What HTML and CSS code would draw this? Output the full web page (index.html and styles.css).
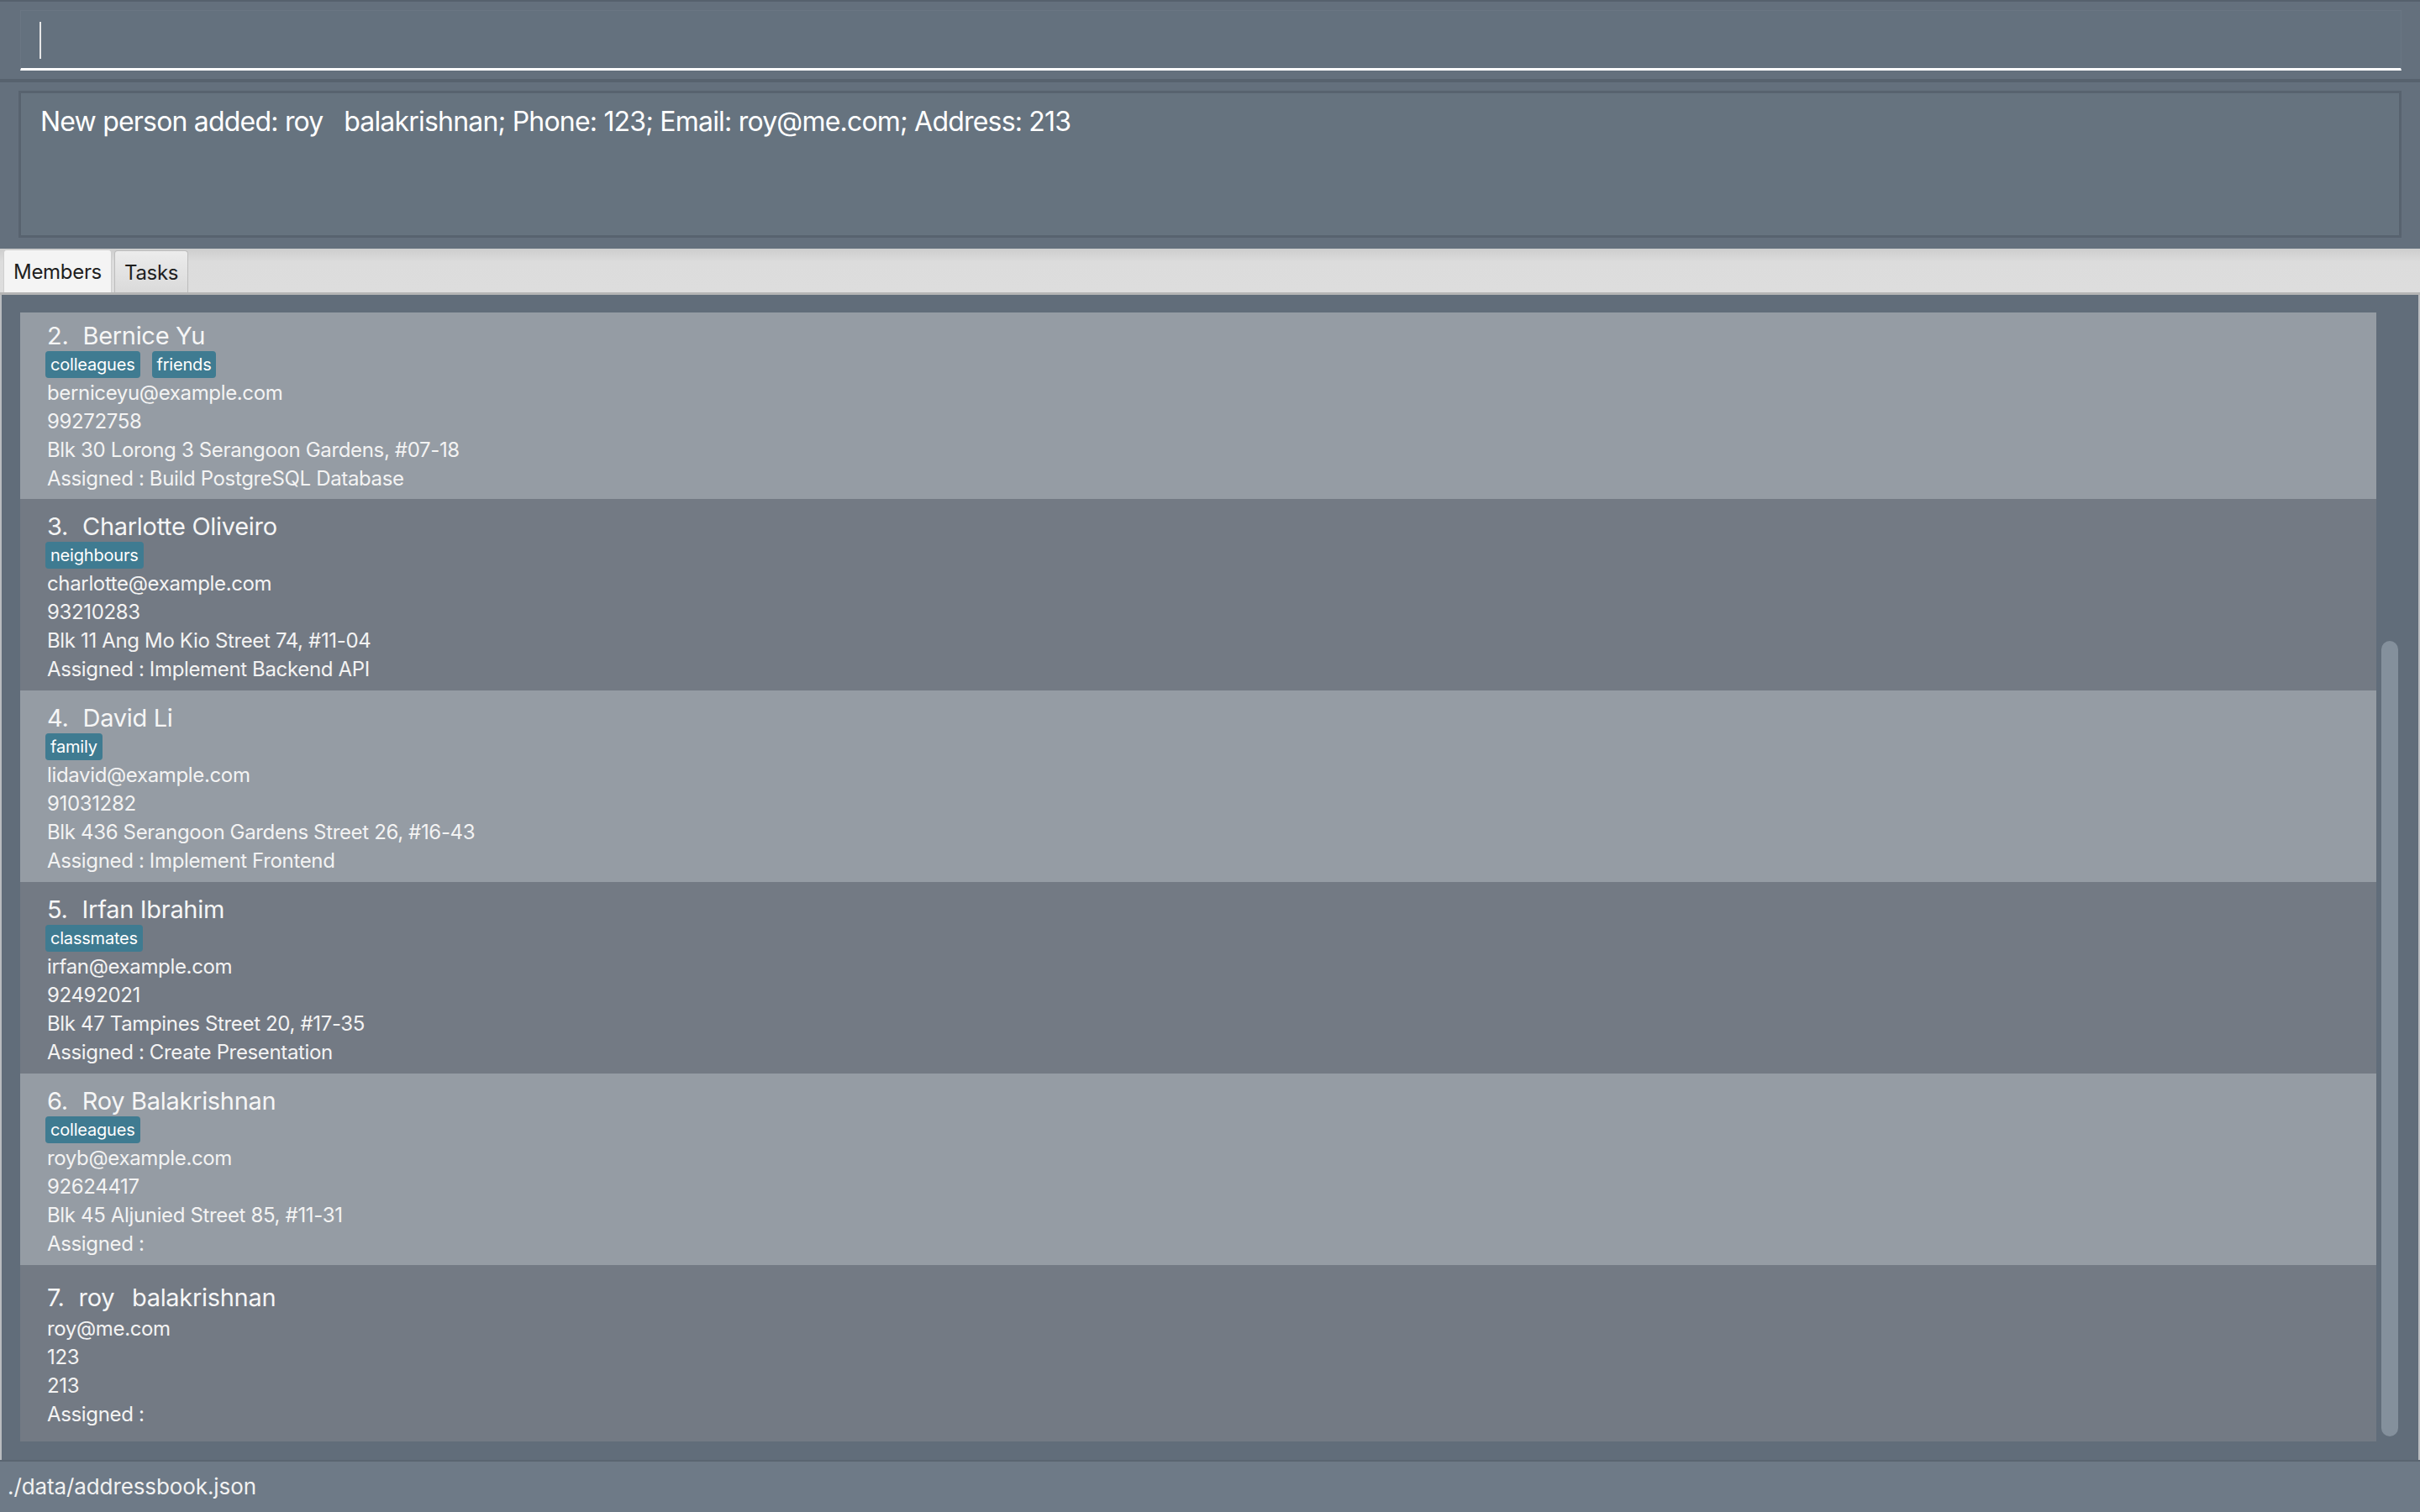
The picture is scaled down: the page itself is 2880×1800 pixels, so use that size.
FILE: index.html
```html
<!DOCTYPE html>
<html lang="en">
<head>
<meta charset="utf-8">
<title>Address Book</title>
<link rel="stylesheet" href="styles.css">
</head>
<body>
<div class="app">
  <div class="command-pane">
    <div class="command-field"><span class="caret"></span></div>
  </div>
  <div class="result-pane">
    <div class="result-box">New person added: roy   balakrishnan; Phone: 123; Email: roy@me.com; Address: 213</div>
  </div>
  <div class="tabs">
    <div class="tab tab-selected">Members</div>
    <div class="tab">Tasks</div>
  </div>
  <div class="list-area">
    <div class="list">
      <div class="card card-light card-first">
        <div class="name"><span class="idx">2.</span><span>Bernice Yu</span></div>
        <div class="tags"><span class="tag">colleagues</span><span class="tag">friends</span></div>
        <div class="field">berniceyu@example.com</div>
        <div class="field">99272758</div>
        <div class="field">Blk 30 Lorong 3 Serangoon Gardens, #07-18</div>
        <div class="field">Assigned : Build PostgreSQL Database</div>
      </div>
      <div class="card card-dark">
        <div class="name"><span class="idx">3.</span><span>Charlotte Oliveiro</span></div>
        <div class="tags"><span class="tag">neighbours</span></div>
        <div class="field">charlotte@example.com</div>
        <div class="field">93210283</div>
        <div class="field">Blk 11 Ang Mo Kio Street 74, #11-04</div>
        <div class="field">Assigned : Implement Backend API</div>
      </div>
      <div class="card card-light">
        <div class="name"><span class="idx">4.</span><span>David Li</span></div>
        <div class="tags"><span class="tag">family</span></div>
        <div class="field">lidavid@example.com</div>
        <div class="field">91031282</div>
        <div class="field">Blk 436 Serangoon Gardens Street 26, #16-43</div>
        <div class="field">Assigned : Implement Frontend</div>
      </div>
      <div class="card card-dark">
        <div class="name"><span class="idx">5.</span><span>Irfan Ibrahim</span></div>
        <div class="tags"><span class="tag">classmates</span></div>
        <div class="field">irfan@example.com</div>
        <div class="field">92492021</div>
        <div class="field">Blk 47 Tampines Street 20, #17-35</div>
        <div class="field">Assigned : Create Presentation</div>
      </div>
      <div class="card card-light">
        <div class="name"><span class="idx">6.</span><span>Roy Balakrishnan</span></div>
        <div class="tags"><span class="tag">colleagues</span></div>
        <div class="field">royb@example.com</div>
        <div class="field">92624417</div>
        <div class="field">Blk 45 Aljunied Street 85, #11-31</div>
        <div class="field">Assigned : </div>
      </div>
      <div class="card card-dark card-notags">
        <div class="name"><span class="idx">7.</span><span>roy  <span class="wide-gap">balakrishnan</span></span></div>
        <div class="field">roy@me.com</div>
        <div class="field">123</div>
        <div class="field">213</div>
        <div class="field">Assigned : </div>
      </div>
    </div>
    <div class="scrollbar"><div class="thumb"></div></div>
  </div>
  <div class="status">./data/addressbook.json</div>
</div>
</body>
</html>
```
FILE: styles.css
```css
* { box-sizing: border-box; }
html, body {
  margin: 0;
  padding: 0;
  width: 2880px;
  height: 1800px;
  overflow: hidden;
  background: #616d7a;
  font-family: Inter, "Noto Sans", sans-serif;
}
.app {
  display: flex;
  flex-direction: column;
  width: 2880px;
  height: 1800px;
}
.command-pane {
  height: 98px;
  background: #64707d;
  border-top: 2px solid #56616d;
  border-bottom: 4px solid #57626e;
  padding: 10px 22px 0 24px;
}
.command-field {
  height: 72px;
  border: 1px solid #6a7683;
  border-bottom: 3px solid #ffffff;
  background: #64717e;
  padding: 13px 0 0 22px;
}
.caret {
  display: block;
  width: 2px;
  height: 44px;
  background: #e6e6e6;
}
.result-pane {
  height: 198px;
  background: #64707d;
  padding: 10px 22px 13px 22px;
}
.result-box {
  height: 175px;
  border: 3px solid #58636f;
  background: #66737f;
  padding: 12px 23px;
  color: #ffffff;
  font-size: 32px;
  line-height: 44px;
  white-space: pre;
  letter-spacing: -0.8px;
}
.tabs {
  height: 55px;
  display: flex;
  align-items: flex-end;
  gap: 3px;
  padding-left: 4px;
  background: linear-gradient(#cdcdcd, #dcdcdc 30%, #dddddd);
  border-bottom: 3px solid #b5b5b5;
}
.tab {
  height: 50px;
  padding: 2px 11px 0 11px;
  border: 1px solid #bdbdbd;
  border-bottom: none;
  border-radius: 4px 4px 0 0;
  background: linear-gradient(#ececec, #dadada);
  color: #1e1e1e;
  font-size: 24px;
  line-height: 48px;
  letter-spacing: -0.3px;
}
.tab-selected {
  height: 51px;
  background: #f4f4f4;
  border-color: #cfcfcf;
}
.list-area {
  height: 1387px;
  display: flex;
  background: #616d7a;
  border-left: 2px solid #b9bcbf;
  border-right: 2px solid #b9bcbf;
  padding: 21px 0 0 22px;
}
.list {
  width: 2804px;
  display: flex;
  flex-direction: column;
}
.card {
  padding: 16px 0 8px 32px;
  color: #f3f3f3;
}
.card-light { background: #959ca4; }
.card-dark { background: #737a84; }
.card-first { padding-top: 11px; padding-bottom: 7px; }
.card-notags { padding-top: 22px; padding-bottom: 15px; }
.card-notags .name { margin-bottom: 3px; }
.name {
  font-size: 29px;
  line-height: 34px;
  height: 34px;
  letter-spacing: -0.3px;
  white-space: pre;
  color: #f6f6f6;
}
.idx { margin-right: 17px; }
.wide-gap { margin-left: 5px; }
.tags {
  height: 34px;
  display: flex;
  align-items: center;
  gap: 14px;
  margin-left: -2px;
}
.tag {
  height: 32px;
  padding: 0 6px;
  border-radius: 4px;
  background: #3f7b91;
  color: #ffffff;
  font-size: 20px;
  line-height: 32px;
  letter-spacing: -0.2px;
}
.field {
  font-size: 24px;
  line-height: 34px;
  height: 34px;
  letter-spacing: -0.35px;
  white-space: pre;
}
.scrollbar {
  width: 20px;
  margin-left: 6px;
  display: flex;
  flex-direction: column;
}
.thumb {
  margin-top: 391px;
  height: 947px;
  border-radius: 10px;
  background: #84909c;
}
.status {
  height: 62px;
  border-top: 2px solid #5a6571;
  background: #6e7a87;
  color: #f2f2f2;
  font-size: 26px;
  line-height: 60px;
  padding-left: 9px;
  letter-spacing: -0.1px;
}
```
